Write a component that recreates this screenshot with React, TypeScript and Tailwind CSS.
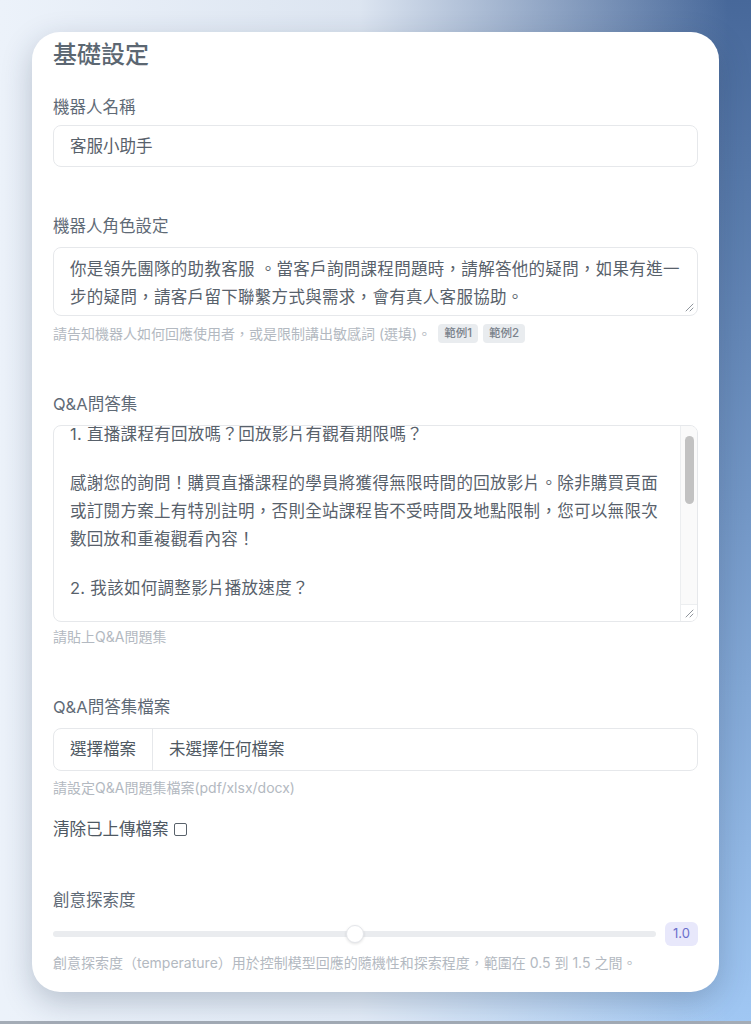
import React from 'react';

const Label = ({ children, className = '' }: { children: React.ReactNode; className?: string }) => (
  <div className={`text-[16.5px] leading-[22px] text-[#5f6a76] ${className}`}>{children}</div>
);

const Hint = ({ children, className = '' }: { children: React.ReactNode; className?: string }) => (
  <div className={`text-[14px] leading-[18px] text-[#b3b9c1] ${className}`}>{children}</div>
);

const Grip = () => (
  <svg width="9" height="9" viewBox="0 0 9 9" className="absolute bottom-[3px] right-[3px]">
    <path d="M8 1L1 8M8 5L5 8" stroke="#8f959c" strokeWidth="1" strokeLinecap="round" />
  </svg>
);

const roleLines = [
  '你是領先團隊的助教客服 。當客戶詢問課程問題時，請解答他的疑問，如果有進一',
  '步的疑問，請客戶留下聯繫方式與需求，會有真人客服協助。',
];

const qaLines = [
  '1. 直播課程有回放嗎？回放影片有觀看期限嗎？',
  '',
  '感謝您的詢問！購買直播課程的學員將獲得無限時間的回放影片。除非購買頁面',
  '或訂閱方案上有特別註明，否則全站課程皆不受時間及地點限制，您可以無限次',
  '數回放和重複觀看內容！',
  '',
  '2. 我該如何調整影片播放速度？',
];

export default function App() {
  return (
    <div className="min-h-[1024px] w-full border-b-[3px] border-[#a4acb6] bg-[linear-gradient(90deg,rgba(236,242,250,1)_0%,rgba(236,242,250,0.9)_48%,rgba(236,242,250,0)_97%),linear-gradient(180deg,#47689a_0%,#a0c7f3_100%)] px-8 pt-8 font-['Inter','Noto_Sans_CJK_TC',sans-serif]">
      <div className="h-[960px] w-[687px] overflow-hidden rounded-[28px] bg-white px-[21px] pt-2 shadow-[0_10px_30px_rgba(30,50,80,0.25)]">
        <h1 className="text-[24px] font-medium leading-[30px] text-[#5c6772]">基礎設定</h1>

        <Label className="mt-[26px]">機器人名稱</Label>
        <div className="mt-[7px] flex h-[42px] items-center rounded-lg border border-[#e6e8eb] px-4 text-[16.5px] text-[#58616b]">
          客服小助手
        </div>

        <Label className="mt-[48px]">機器人角色設定</Label>
        <div className="relative mt-[10px] h-[69px] rounded-lg border border-[#e6e8eb] px-4 pt-[7px] text-[16.5px] tracking-[0.3px] text-[#58616b]">
          {roleLines.map((l) => (
            <div key={l} className="h-[28px] whitespace-nowrap leading-[28px]">
              {l}
            </div>
          ))}
          <Grip />
        </div>
        <div className="mt-[8px] flex items-center gap-[5px]">
          <Hint>請告知機器人如何回應使用者，或是限制講出敏感詞 (選填)。</Hint>
          <span className="ml-[2px] rounded bg-[#e9ecef] px-[6px] text-[11.5px] font-medium leading-[19px] text-[#7b838c]">範例1</span>
          <span className="rounded bg-[#e9ecef] px-[6px] text-[11.5px] font-medium leading-[19px] text-[#7b838c]">範例2</span>
        </div>

        <Label className="mt-[50px]">Q&amp;A問答集</Label>
        <div className="relative mt-[10px] h-[197px] overflow-hidden rounded-lg border border-[#e6e8eb] text-[16.5px] tracking-[0.3px] text-[#58616b]">
          <div className="-mt-[6px] pl-4 pr-[20px]">
            {qaLines.map((l, i) =>
              l ? (
                <div key={i} className="h-[28px] whitespace-nowrap leading-[28px]">
                  {l}
                </div>
              ) : (
                <div key={i} className="h-[21px]" />
              ),
            )}
          </div>
          <div className="absolute right-0 top-0 flex h-full w-[17px] flex-col border-l border-[#eceef0] bg-[#fafafa]">
            <div className="flex-1 pt-[10px]">
              <div className="mx-auto h-[68px] w-[9px] rounded-full bg-[#c2c2c2]" />
            </div>
            <div className="relative h-[17px] border-t border-[#eceef0] bg-white">
              <Grip />
            </div>
          </div>
        </div>
        <Hint className="mt-[6px]">請貼上Q&amp;A問題集</Hint>

        <Label className="mt-[50px]">Q&amp;A問答集檔案</Label>
        <div className="mt-[10px] flex h-[43px] items-stretch rounded-lg border border-[#e6e8eb] text-[16.5px] text-[#4f5963]">
          <div className="flex w-[99px] items-center justify-center border-r border-[#e6e8eb]">選擇檔案</div>
          <div className="flex items-center pl-4">未選擇任何檔案</div>
        </div>
        <Hint className="mt-[8px]">請設定Q&amp;A問題集檔案(pdf/xlsx/docx)</Hint>

        <div className="mt-[20px] flex h-[24px] items-center gap-[5px] text-[16.5px] text-[#4f5963]">
          <span>清除已上傳檔案</span>
          <span className="h-[13px] w-[13px] rounded-[2px] border border-[#59626b]" />
        </div>

        <Label className="mt-[48px]">創意探索度</Label>
        <div className="mt-[11px] flex h-[24px] items-center gap-[9px]">
          <div className="relative h-[6px] flex-1 rounded-full bg-[#eaecef]">
            <div className="absolute left-1/2 top-1/2 h-[18px] w-[18px] -translate-x-1/2 -translate-y-1/2 rounded-full border border-[#e4e6ea] bg-white shadow-[0_1px_3px_rgba(0,0,0,0.12)]" />
          </div>
          <div className="flex h-[24px] w-[33px] items-center justify-center rounded-md bg-[#e8e8fb] text-[13px] text-[#6b6fcc]">
            1.0
          </div>
        </div>
        <Hint className="mt-[8px]">創意探索度（temperature）用於控制模型回應的隨機性和探索程度，範圍在 0.5 到 1.5 之間。</Hint>
      </div>
    </div>
  );
}
